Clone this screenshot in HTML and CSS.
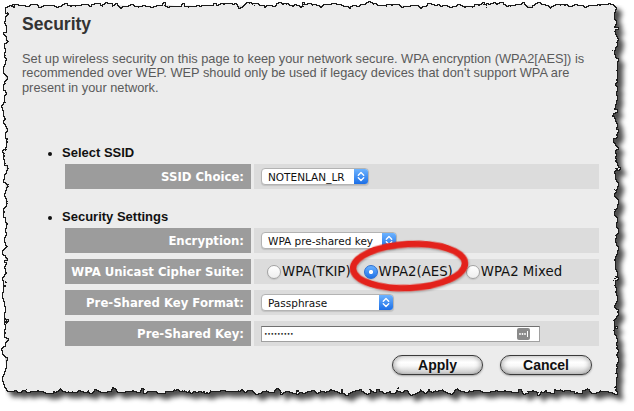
FILE: index.html
```html
<!DOCTYPE html>
<html>
<head>
<meta charset="utf-8">
<title>Security</title>
<link rel="stylesheet" href="styles.css">
</head>
<body>
<div class="page">
  <svg class="paper" width="634" height="411" viewBox="0 0 634 411" aria-hidden="true">
    <defs>
      <filter id="torn" filterUnits="userSpaceOnUse" x="0" y="0" width="634" height="411">
        <feTurbulence type="fractalNoise" baseFrequency="0.11" numOctaves="4" seed="5" result="noise"/>
        <feDisplacementMap in="SourceGraphic" in2="noise" scale="11" xChannelSelector="R" yChannelSelector="G" result="paper"/>
        <feMorphology in="paper" operator="dilate" radius="1" result="dil"/>
        <feFlood flood-color="#1e1e1e" result="ink"/>
        <feComposite in="ink" in2="dil" operator="in" result="edge"/>
        <feGaussianBlur in="dil" stdDeviation="2.6" result="blur"/>
        <feOffset in="blur" dx="5" dy="5" result="blurOff"/>
        <feFlood flood-color="#000000" flood-opacity="0.7"/>
        <feComposite in2="blurOff" operator="in" result="shadow"/>
        <feMerge>
          <feMergeNode in="shadow"/>
          <feMergeNode in="edge"/>
          <feMergeNode in="paper"/>
        </feMerge>
      </filter>
    </defs>
    <rect x="6" y="6" width="610" height="385" fill="#ececec" filter="url(#torn)"/>
  </svg>

  <main class="panel">
    <h1 class="title">Security</h1>
    <p class="intro">Set up wireless security on this page to keep your network secure. WPA encryption (WPA2[AES]) is recommended over WEP. WEP should only be used if legacy devices that don't support WPA are present in your network.</p>

    <section class="group group-ssid">
      <h2 class="group-head">Select SSID</h2>
      <div class="rows">
        <div class="row">
          <div class="label">SSID Choice:</div>
          <div class="value">
            <div class="select sel-ssid">
              <span class="sel-text">NOTENLAN_LR</span>
              <span class="stepper"><svg width="14" height="15" viewBox="0 0 14 15"><path d="M4.3 6.2 L7 3.6 L9.7 6.2 M4.3 8.8 L7 11.4 L9.7 8.8" fill="none" stroke="#fff" stroke-width="1.4" stroke-linecap="round" stroke-linejoin="round"/></svg></span>
            </div>
          </div>
        </div>
      </div>
    </section>

    <section class="group group-sec">
      <h2 class="group-head">Security Settings</h2>
      <div class="rows">
        <div class="row">
          <div class="label">Encryption:</div>
          <div class="value">
            <div class="select sel-enc">
              <span class="sel-text">WPA pre-shared key</span>
              <span class="stepper"><svg width="14" height="15" viewBox="0 0 14 15"><path d="M4.3 6.2 L7 3.6 L9.7 6.2 M4.3 8.8 L7 11.4 L9.7 8.8" fill="none" stroke="#fff" stroke-width="1.4" stroke-linecap="round" stroke-linejoin="round"/></svg></span>
            </div>
          </div>
        </div>
        <div class="row">
          <div class="label">WPA Unicast Cipher Suite:</div>
          <div class="value radios">
            <label class="radio-opt"><span class="radio"></span><span class="radio-text">WPA(TKIP)</span></label>
            <label class="radio-opt"><span class="radio on"></span><span class="radio-text">WPA2(AES)</span></label>
            <label class="radio-opt"><span class="radio"></span><span class="radio-text">WPA2 Mixed</span></label>
          </div>
        </div>
        <div class="row">
          <div class="label">Pre-Shared Key Format:</div>
          <div class="value">
            <div class="select sel-fmt">
              <span class="sel-text">Passphrase</span>
              <span class="stepper"><svg width="14" height="15" viewBox="0 0 14 15"><path d="M4.3 6.2 L7 3.6 L9.7 6.2 M4.3 8.8 L7 11.4 L9.7 8.8" fill="none" stroke="#fff" stroke-width="1.4" stroke-linecap="round" stroke-linejoin="round"/></svg></span>
            </div>
          </div>
        </div>
        <div class="row">
          <div class="label">Pre-Shared Key:</div>
          <div class="value">
            <div class="keyfield">
              <span class="dots">•••••••••</span>
              <svg class="keychain" width="13" height="12" viewBox="0 0 13 12"><rect x="0" y="0" width="13" height="12" rx="2" fill="#8a8a8a"/><circle cx="3" cy="6" r="0.9" fill="#fff"/><circle cx="5.5" cy="6" r="0.9" fill="#fff"/><circle cx="8" cy="6" r="0.9" fill="#fff"/><rect x="10" y="3" width="1" height="6" fill="#fff"/></svg>
            </div>
          </div>
        </div>
      </div>
      <div class="actions">
        <button class="btn btn-apply">Apply</button>
        <button class="btn btn-cancel">Cancel</button>
      </div>
    </section>
  </main>

  <svg class="callout" width="130" height="62" viewBox="0 0 130 62" aria-hidden="true">
    <defs>
      <filter id="ringShadow" x="-10%" y="-20%" width="120%" height="140%">
        <feDropShadow dx="0.5" dy="1" stdDeviation="0.8" flood-color="#000" flood-opacity="0.35"/>
      </filter>
    </defs>
    <ellipse cx="65" cy="31" rx="56" ry="22" fill="none" stroke="#e3231a" stroke-width="6.5" transform="rotate(-3 65 31)" filter="url(#ringShadow)"/>
  </svg>
</div>
</body>
</html>
```

FILE: styles.css
```css
html, body {
  margin: 0;
  padding: 0;
  background: #ffffff;
}

.page {
  position: relative;
  width: 634px;
  height: 411px;
  overflow: hidden;
}

.paper {
  position: absolute;
  left: 0;
  top: 0;
}

.panel {
  position: relative;
  padding: 14px 0 0 22px;
}

.title {
  margin: 0;
  font: bold 17.5px/20px "Liberation Sans", Arial, sans-serif;
  color: #333333;
}

.intro {
  margin: 18px 0 0;
  width: 580px;
  font: 12.8px/14.4px "Liberation Sans", Arial, sans-serif;
  color: #5a5a5a;
}

.group-ssid {
  margin-top: 50px;
}

.group-sec {
  margin-top: 20px;
}

.group-head {
  margin: 0 0 3px;
  padding-left: 26px;
  display: flex;
  align-items: center;
  gap: 10px;
  font: bold 13px/16px "Liberation Sans", Arial, sans-serif;
  color: #111111;
}

.group-head::before {
  content: "";
  width: 4px;
  height: 4px;
  margin-top: 2px;
  border-radius: 50%;
  background: #111111;
}

.rows {
  margin-left: 43px;
  width: 534px;
  display: flex;
  flex-direction: column;
  gap: 6px;
}

.row {
  display: flex;
  gap: 3px;
  height: 25px;
}

.label {
  width: 186px;
  box-sizing: border-box;
  padding-right: 7px;
  background: #9c9c9c;
  color: #ffffff;
  font: bold 11.7px "DejaVu Sans", Verdana, sans-serif;
  display: flex;
  align-items: center;
  justify-content: flex-end;
}

.value {
  flex: 1;
  background: #dcdcdc;
  display: flex;
  align-items: center;
  padding-left: 7px;
}

.select {
  display: flex;
  height: 17px;
  box-sizing: border-box;
  border: 1px solid #b3b3b3;
  border-radius: 4px;
  background: #ffffff;
  box-shadow: 0 1px 1px rgba(0, 0, 0, 0.12);
  overflow: hidden;
  font: 10.5px "DejaVu Sans", Verdana, sans-serif;
  color: #111111;
}

.sel-ssid { width: 108px; }
.sel-enc { width: 136px; }
.sel-fmt { width: 133px; }

.sel-text {
  flex: 1;
  padding-left: 6px;
  display: flex;
  align-items: center;
  white-space: nowrap;
}

.stepper {
  width: 14px;
  background: linear-gradient(#6db3ff, #1c6fe6);
  display: flex;
  align-items: center;
  justify-content: center;
}

.radio-opt {
  display: flex;
  align-items: center;
  gap: 1px;
  margin-left: 13px;
  font: 13.3px "DejaVu Sans", Verdana, sans-serif;
  color: #111111;
}

.radio-opt:first-child {
  margin-left: 6px;
}

.radio {
  width: 14px;
  height: 14px;
  box-sizing: border-box;
  border-radius: 50%;
  border: 1px solid #a3a3a3;
  background: linear-gradient(#ffffff, #eeeeee);
  box-shadow: 0 1px 1px rgba(0, 0, 0, 0.1);
}

.radio.on {
  border-color: #2a6fd3;
  background:
    radial-gradient(circle, #ffffff 0 1.8px, transparent 2.4px),
    linear-gradient(#6ab1ff, #1f73e8);
}

.keyfield {
  width: 279px;
  height: 16px;
  box-sizing: border-box;
  border: 1px solid #a0a0a0;
  border-top-color: #707070;
  background: #ffffff;
  display: flex;
  align-items: center;
  justify-content: space-between;
  padding: 0 9px 0 2px;
}

.dots {
  font: 6px "DejaVu Sans", sans-serif;
  letter-spacing: -0.3px;
  color: #111111;
}

.keychain {
  display: block;
}

.actions {
  margin: 9px 0 0 43px;
  width: 527px;
  display: flex;
  justify-content: flex-end;
  gap: 17px;
}

.btn {
  width: 91px;
  height: 20px;
  padding: 0;
  border-radius: 10px;
  border: 1.5px solid #3a3a3a;
  background: linear-gradient(#dedede 0%, #ffffff 35%, #f8f8f8 55%, #c4c4c4 100%);
  box-shadow:
    inset 5px 0 5px -3px rgba(0, 0, 0, 0.25),
    inset -5px 0 5px -3px rgba(0, 0, 0, 0.25),
    0 1px 2px rgba(0, 0, 0, 0.3);
  font: bold 14px "Liberation Sans", Arial, sans-serif;
  color: #111111;
}

.btn-cancel {
  width: 92px;
}

.callout {
  position: absolute;
  left: 344px;
  top: 235px;
}
```
